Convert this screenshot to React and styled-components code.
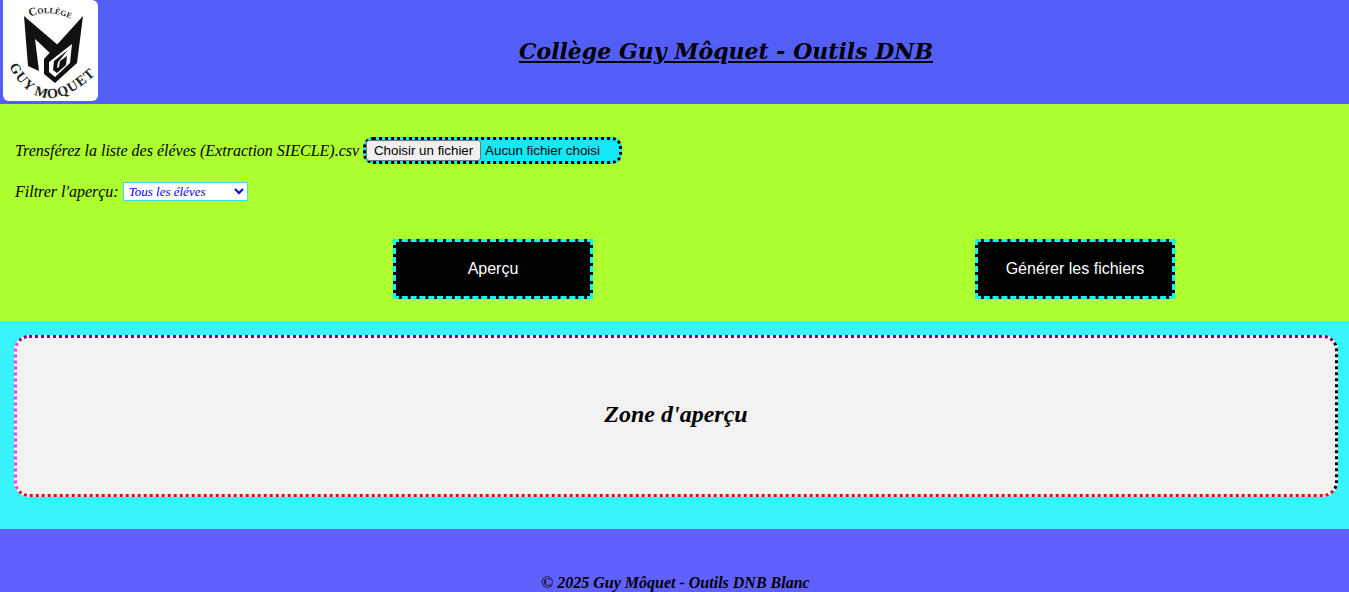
import React from "react";
import styled, { createGlobalStyle } from "styled-components";

const GlobalStyle = createGlobalStyle`
  html, body {
    margin: 0;
    padding: 0;
    overflow: hidden;
  }
  body {
    font-family: "Liberation Serif", "Times New Roman", serif;
    font-style: italic;
    color: #000;
  }
`;

const Page = styled.div`
  display: flex;
  flex-direction: column;
  height: 592px;
  overflow: hidden;
`;

const Header = styled.header`
  display: flex;
  align-items: center;
  height: 104px;
  flex: none;
  background: #535ef7;
`;

const LogoBox = styled.div`
  width: 95px;
  height: 101px;
  margin: 0 0 3px 3px;
  flex: none;
  background: #fff;
  border-radius: 0 6px 6px 6px;
`;

const Title = styled.h1`
  flex: 1;
  margin: 0;
  padding: 0 0 3px 5px;
  text-align: center;
  font-family: "DejaVu Serif", Georgia, serif;
  font-size: 22px;
  font-weight: bold;
  font-style: italic;
  text-decoration: underline;
`;

const Controls = styled.section`
  display: flex;
  flex-direction: column;
  height: 217px;
  flex: none;
  box-sizing: border-box;
  padding: 33px 15px 0;
  background: #adff2f;
`;

const Row = styled.div`
  display: flex;
  align-items: center;
  gap: 4px;
  font-size: 16px;
  margin-bottom: ${(p) => p.$gap || 0}px;
`;

const FilePicker = styled.div`
  display: flex;
  align-items: center;
  box-sizing: border-box;
  width: 259px;
  height: 27px;
  border: 3px dotted #000;
  border-radius: 10px;
  background: #12e9f8;
  font-family: "Liberation Sans", Arial, sans-serif;
  font-style: normal;
  font-size: 13.33px;
`;

const FileButton = styled.button`
  box-sizing: border-box;
  height: 21px;
  width: 115px;
  margin-right: 4px;
  padding: 0;
  border: 1px solid #767676;
  border-radius: 3px;
  background: #efefef;
  color: #000;
  font: inherit;
`;

const Select = styled.select`
  box-sizing: border-box;
  width: 125px;
  height: 19px;
  padding: 0 0 0 1px;
  border: 1px solid #2fe6f5;
  background: #fff;
  color: #0000ff;
  font-family: "Liberation Serif", "Times New Roman", serif;
  font-style: italic;
  font-size: 13px;
`;

const Actions = styled.div`
  display: flex;
  justify-content: space-between;
  margin: 38px 0 0;
  padding: 0 159px 0 378px;
`;

const ActionButton = styled.button`
  box-sizing: border-box;
  width: 200px;
  height: 60px;
  border: 3px dashed #00ffff;
  background: #000;
  color: #fff;
  font-family: "Liberation Sans", Arial, sans-serif;
  font-size: 16px;
`;

const PreviewSection = styled.section`
  height: 208px;
  flex: none;
  box-sizing: border-box;
  padding: 14px 11px 0 14px;
  background: #38f3f9;
`;

const PreviewBox = styled.div`
  display: flex;
  align-items: center;
  justify-content: center;
  box-sizing: border-box;
  height: 162px;
  padding-bottom: 4px;
  border: 3px dotted;
  border-color: #800080 #000 #ff0000 #ff33ff;
  border-radius: 15px;
  background: #f2f2f2;
`;

const PreviewTitle = styled.h2`
  margin: 0;
  font-size: 24px;
  font-weight: bold;
  font-style: italic;
`;

const Footer = styled.footer`
  flex: 1;
  display: flex;
  justify-content: center;
  align-items: flex-end;
  padding-left: 2px;
  background: #6060ff;
  font-size: 16px;
  font-weight: bold;
  line-height: 18px;
`;

const Logo = () => (
  <svg width="95" height="101" viewBox="0 0 95 101">
    <defs>
      <path id="topArc" d="M27 17 Q48 7 76 23" />
      <path id="bottomArc" d="M6 66 Q39 128 97 70" />
    </defs>
    <text
      fontFamily="Liberation Serif, serif"
      fontStyle="normal"
      fontWeight="bold"
      fontSize="11.5"
      fontVariant="small-caps"
      fill="#222"
    >
      <textPath href="#topArc">Collège</textPath>
    </text>
    {/* left half of the M */}
    <path fill="#111" d="M21 16 L56 46 L48 54 L32 39 L36 71 L25 66 Z" />
    {/* right half of the M, running into the G */}
    <path
      fill="#111"
      fillRule="evenodd"
      d="M80 16 L74 63 L52 83 L41 74 L41 59 Z M69 44 L46 62 L46 72 L52 77 L67 63 Z"
    />
    {/* inner bar of the G */}
    <path fill="#111" d="M65 50 L51 61 L50 70 L54 73 L63 65 L64 56 L57 61 L56 67 L54 68 L55 62 Z" />
    <text
      fontFamily="Liberation Serif, serif"
      fontStyle="normal"
      fontWeight="bold"
      fontSize="14"
      letterSpacing="1"
      fill="#222"
    >
      <textPath href="#bottomArc">GUY MOQUET</textPath>
    </text>
  </svg>
);

const App = () => {
  return (
    <Page>
      <GlobalStyle />
      <Header>
        <LogoBox>
          <Logo />
        </LogoBox>
        <Title>Collège Guy Môquet - Outils DNB</Title>
      </Header>
      <Controls>
        <Row $gap={18}>
          <span>Trensférez la liste des éléves (Extraction SIECLE).csv</span>
          <FilePicker>
            <FileButton type="button">Choisir un fichier</FileButton>
            <span>Aucun fichier choisi</span>
          </FilePicker>
        </Row>
        <Row>
          <span>Filtrer l'aperçu:</span>
          <Select defaultValue="all">
            <option value="all">Tous les éléves</option>
          </Select>
        </Row>
        <Actions>
          <ActionButton type="button">Aperçu</ActionButton>
          <ActionButton type="button">Générer les fichiers</ActionButton>
        </Actions>
      </Controls>
      <PreviewSection>
        <PreviewBox>
          <PreviewTitle>Zone d'aperçu</PreviewTitle>
        </PreviewBox>
      </PreviewSection>
      <Footer>© 2025 Guy Môquet - Outils DNB Blanc</Footer>
    </Page>
  );
};

export default App;
